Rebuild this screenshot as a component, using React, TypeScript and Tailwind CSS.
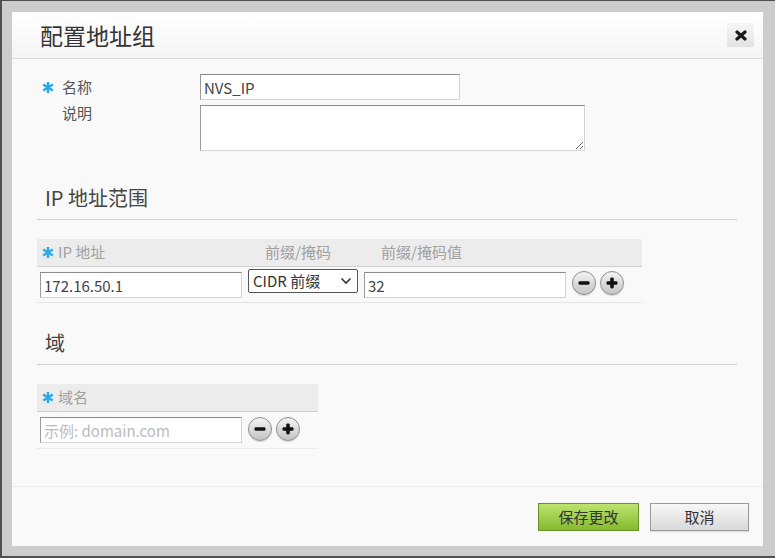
import React from 'react';

function Star() {
  return (
    <svg width="12" height="11" viewBox="0 0 12 11" className="shrink-0">
      <g stroke="#2aa9e8" strokeWidth="2.4" strokeLinecap="butt">
        <line x1="6" y1="0" x2="6" y2="11" />
        <line x1="1.2" y1="2.5" x2="10.8" y2="8.5" />
        <line x1="1.2" y1="8.5" x2="10.8" y2="2.5" />
      </g>
    </svg>
  );
}

function RoundBtn({ plus }: { plus?: boolean }) {
  return (
    <div className="w-[24px] h-[24px] rounded-full border border-[#8e8e8e] bg-gradient-to-b from-[#f4f4f4] to-[#c4c4c4] shadow-[0_1px_1px_rgba(0,0,0,0.15)] flex items-center justify-center shrink-0">
      <svg width="14" height="14" viewBox="0 0 14 14">
        <rect x="1.5" y="5.2" width="11" height="3.6" rx="1.4" fill="#111" />
        {plus && <rect x="5.2" y="1.5" width="3.6" height="11" rx="1.4" fill="#111" />}
      </svg>
    </div>
  );
}

const inputCls =
  'h-[26px] bg-white border border-[#d4d4d4] border-t-[#8a8a8a] border-l-[#9a9a9a] px-[3px] text-[15px] text-[#444] outline-none placeholder:text-[#bbb]';

export default function App() {
  return (
    <div className="w-[775px] h-[558px] bg-[#cccccc] border-l-2 border-t border-b-2 border-[#4f4f4f] pl-[10px] pt-[11px] font-['Noto_Sans_CJK_SC',sans-serif] overflow-hidden">
      <div className="w-[751px] h-[534px] bg-[#f9f9f9] flex flex-col">
        {/* header */}
        <div className="h-[47px] shrink-0 border-b border-[#dcdcdc] bg-gradient-to-b from-white to-[#f4f4f4] flex items-center justify-between pl-[28px] pr-[9px]">
          <h1 className="text-[23px] leading-[30px] text-[#333]">配置地址组</h1>
          <button className="w-[27px] h-[24px] bg-gradient-to-b from-[#f6f6f6] to-[#e2e2e2] flex items-center justify-center">
            <svg width="12" height="11" viewBox="0 0 12 11">
              <g stroke="#1a1a1a" strokeWidth="3.2" strokeLinecap="round">
                <line x1="2" y1="2" x2="10" y2="9" />
                <line x1="10" y1="2" x2="2" y2="9" />
              </g>
            </svg>
          </button>
        </div>

        {/* body */}
        <div className="flex-1 px-[25px] pr-[26px]">
          <div className="pl-[5px] pt-[15px] flex flex-col gap-[5px]">
            <div className="flex items-center">
              <div className="w-[20px] flex"><Star /></div>
              <div className="w-[138px] text-[15px] leading-[20px] text-[#555]">名称</div>
              <input className={inputCls + ' w-[260px]'} defaultValue="NVS_IP" />
            </div>
            <div className="flex items-start">
              <div className="w-[20px]" />
              <div className="w-[138px] text-[15px] leading-[20px] text-[#555] -mt-[2px]">说明</div>
              <textarea className="w-[385px] h-[46px] bg-white border border-[#d4d4d4] border-t-[#8a8a8a] border-l-[#9a9a9a] outline-none resize" />
            </div>
          </div>

          {/* IP section */}
          <div className="mt-[33px] border-b border-[#d0d0d0] pb-[7px] pl-[8px]">
            <h2 className="text-[20px] leading-[28px] text-[#444]">IP 地址范围</h2>
          </div>
          <div className="mt-[19px] w-[605px]">
            <div className="h-[28px] bg-[#ececec] border-b border-[#cfcfcf] flex items-center text-[15px] text-[#a0a0a0]">
              <div className="w-[228px] flex items-center pl-[5px] gap-[4px]"><Star />IP 地址</div>
              <div className="w-[116px]">前缀/掩码</div>
              <div>前缀/掩码值</div>
            </div>
            <div className="h-[36px] border-b border-[#e6e6e6] flex items-start pl-[3px]">
              <input className={inputCls + ' w-[202px] mt-[5px]'} defaultValue="172.16.50.1" />
              <div className="ml-[6px] mt-[2px] w-[110px] h-[24px] bg-white border border-[#555] rounded-[2px] flex items-center justify-between pl-[4px] pr-[5px] text-[15px] text-[#333]">
                <span>CIDR 前缀</span>
                <svg width="12" height="8" viewBox="0 0 12 8">
                  <polyline points="1.5,1.5 6,6 10.5,1.5" fill="none" stroke="#333" strokeWidth="1.6" />
                </svg>
              </div>
              <input className={inputCls + ' w-[202px] mt-[5px] ml-[6px]'} defaultValue="32" />
              <div className="ml-[6px] mt-[4px] flex gap-[4px]">
                <RoundBtn />
                <RoundBtn plus />
              </div>
            </div>
          </div>

          {/* Domain section */}
          <div className="mt-[26px] border-b border-[#d0d0d0] pb-[7px] pl-[8px]">
            <h2 className="text-[20px] leading-[28px] text-[#444]">域</h2>
          </div>
          <div className="mt-[19px] w-[281px]">
            <div className="h-[28px] bg-[#ececec] border-b border-[#cfcfcf] flex items-center text-[15px] text-[#a0a0a0] pl-[5px] gap-[4px]">
              <Star />域名
            </div>
            <div className="h-[37px] border-b border-[#ebebeb] flex items-start pl-[3px]">
              <input className={inputCls + ' w-[202px] mt-[5px]'} placeholder="示例: domain.com" />
              <div className="ml-[6px] mt-[5px] flex gap-[4px]">
                <RoundBtn />
                <RoundBtn plus />
              </div>
            </div>
          </div>
        </div>

        {/* footer */}
        <div className="h-[60px] shrink-0 border-t border-[#ececec] flex justify-end items-start pt-[16px] pr-[14px] gap-[11px]">
          <button className="w-[101px] h-[28px] border border-[#6a922c] bg-gradient-to-b from-[#bde46f] to-[#86ba2a] text-[15px] text-[#333]">保存更改</button>
          <button className="w-[99px] h-[28px] border border-[#9a9a9a] bg-gradient-to-b from-[#f7f7f7] to-[#d9d9d9] text-[15px] text-[#333] shadow-[0_1px_1px_rgba(0,0,0,0.1)]">取消</button>
        </div>
      </div>
    </div>
  );
}
